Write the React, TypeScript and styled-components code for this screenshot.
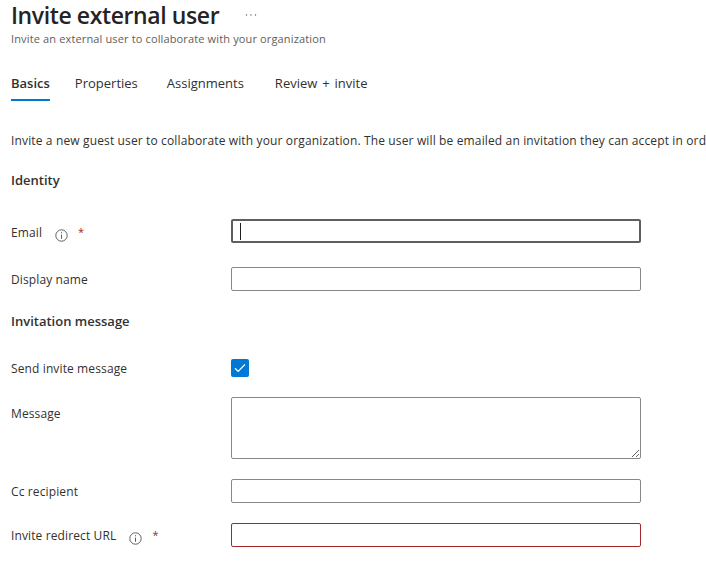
import React from "react";
import styled, { createGlobalStyle } from "styled-components";

const Global = createGlobalStyle`
  html, body { margin: 0; padding: 0; background: #fff; overflow: hidden; }
  body { font-family: "Open Sans", "Noto Sans", sans-serif; color: #323130; }
  * { box-sizing: border-box; }
`;
const Page = styled.div`
  width: 706px; height: 563px; overflow: hidden; padding-left: 11px;
`;
const Header = styled.header`
  height: 47px; display: flex; flex-direction: column;
`;
const TitleRow = styled.div`
  display: flex; align-items: center; height: 31px; gap: 26px;
`;
const Title = styled.h1`
  margin: 0; font-size: 23px; font-weight: 600; line-height: 31px; color: #252423; letter-spacing: -0.4px;
`;
const More = styled.svg`
  width: 12px; height: 4px; color: #605e5c; margin-bottom: 1px;
`;
const Subtitle = styled.div`
  font-size: 11px; line-height: 16px; color: #605e5c; letter-spacing: 0.14px;
`;
const Tabs = styled.nav`
  display: flex; margin-top: 25px; height: 29px;
`;
const Tab = styled.div<{ $active?: boolean; $gap?: number }>`
  font-size: 13px; line-height: 20px; height: 29px; padding-top: 1px; color: #323130;
  font-weight: ${p => (p.$active ? 600 : 400)};
  border-bottom: ${p => (p.$active ? "2px solid #0078d4" : "none")};
  margin-right: ${p => p.$gap ?? 0}px;
  word-spacing: 1.5px;
`;
const Intro = styled.p`
  margin: 30px 0 0; font-size: 12px; line-height: 20px; white-space: nowrap; color: #323130; letter-spacing: 0.14px;
`;
const Section = styled.h2<{ $top: number }>`
  margin: ${p => p.$top}px 0 0; font-size: 13px; line-height: 18px; font-weight: 600; color: #323130;
`;
const Row = styled.div<{ $top: number; $start?: boolean }>`
  display: grid; grid-template-columns: 220px 410px; margin-top: ${p => p.$top}px;
  align-items: ${p => (p.$start ? "start" : "center")};
`;
const Label = styled.label<{ $offset?: number }>`
  display: flex; align-items: center; font-size: 12px; line-height: 16px; padding-top: 2px; color: #323130; letter-spacing: 0.12px;
  margin-top: ${p => p.$offset ?? 0}px;
`;
const Info = styled.svg`
  width: 13px; height: 13px; margin-left: 13px; margin-top: 4px; color: #605e5c;
`;
const Star = styled.span`
  color: #a4262c; margin-left: 10px; font-size: 11px; margin-top: -2px;
`;
const FieldWrap = styled.div`
  position: relative; height: 24px;
`;
const Input = styled.input<{ $state?: "focus" | "error" }>`
  display: block; width: 100%; height: 24px; padding: 0 8px; outline: none; background: #fff; border-radius: 2px;
  border: ${p => (p.$state === "focus" ? "2px solid #605e5c" : p.$state === "error" ? "1px solid #a4262c" : "1px solid #8a8886")};
`;
const Caret = styled.span`
  position: absolute; left: 9px; top: 4px; width: 1px; height: 17px; background: #201f1e;
`;
const Check = styled.span`
  display: flex; align-items: center; justify-content: center; width: 18px; height: 18px; background: #0078d4; border-radius: 2px;
`;
const TextArea = styled.textarea`
  display: block; width: 100%; height: 62px; border: 1px solid #8a8886; border-radius: 2px; outline: none; resize: vertical; background: #fff; margin: 0; padding: 4px 8px;
`;

const InfoIcon = () => (
  <Info viewBox="0 0 13 13" fill="none" stroke="currentColor" strokeWidth="1">
    <circle cx="6.5" cy="6.5" r="5.7" />
    <path d="M6.5 5.6V9.8" />
    <path d="M6.5 3.2v1.1" />
  </Info>
);

export default function App() {
  return (
    <Page>
      <Global />
      <Header>
        <TitleRow>
          <Title>Invite external user</Title>
          <More viewBox="0 0 12 4" fill="currentColor">
            <circle cx="1.5" cy="2" r=".7" />
            <circle cx="6" cy="2" r=".7" />
            <circle cx="10.5" cy="2" r=".7" />
          </More>
        </TitleRow>
        <Subtitle>Invite an external user to collaborate with your organization</Subtitle>
      </Header>
      <Tabs>
        <Tab $active $gap={25}>Basics</Tab>
        <Tab $gap={29}>Properties</Tab>
        <Tab $gap={31}>Assignments</Tab>
        <Tab>Review + invite</Tab>
      </Tabs>
      <Intro>Invite a new guest user to collaborate with your organization. The user will be emailed an invitation they can accept in order to begin collaborating.</Intro>
      <Section $top={20}>Identity</Section>
      <Row $top={30}>
        <Label $offset={2}>Email<InfoIcon /><Star>*</Star></Label>
        <FieldWrap><Input $state="focus" /><Caret /></FieldWrap>
      </Row>
      <Row $top={24}>
        <Label>Display name</Label>
        <FieldWrap><Input /></FieldWrap>
      </Row>
      <Section $top={21}>Invitation message</Section>
      <Row $top={29}>
        <Label>Send invite message</Label>
        <Check>
          <svg width="12" height="10" viewBox="0 0 12 10" fill="none" stroke="#fff" strokeWidth="1.3">
            <path d="M1 5.2 4.2 8.4 11 1.4" />
          </svg>
        </Check>
      </Row>
      <Row $top={20} $start>
        <Label $offset={7}>Message</Label>
        <TextArea />
      </Row>
      <Row $top={20}>
        <Label>Cc recipient</Label>
        <FieldWrap><Input /></FieldWrap>
      </Row>
      <Row $top={20}>
        <Label>Invite redirect URL<InfoIcon /><Star>*</Star></Label>
        <FieldWrap><Input $state="error" /></FieldWrap>
      </Row>
    </Page>
  );
}
